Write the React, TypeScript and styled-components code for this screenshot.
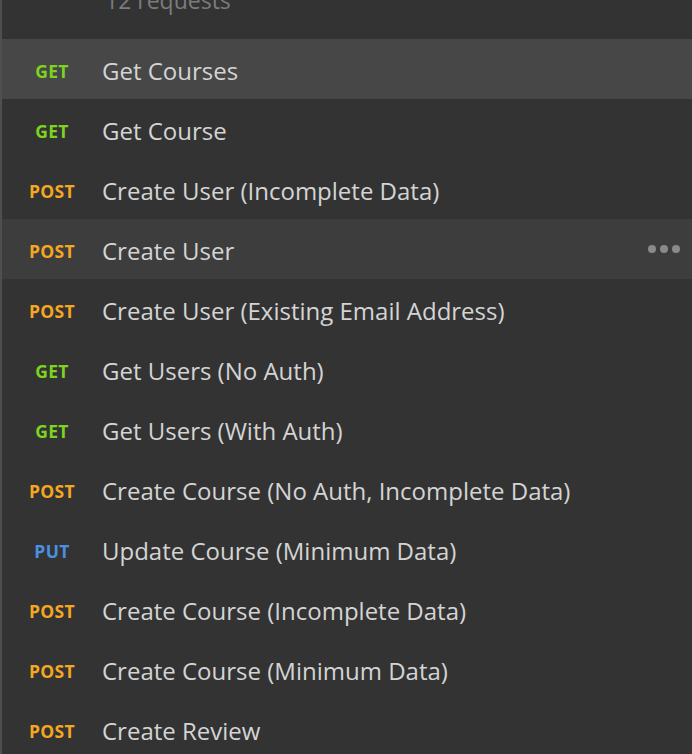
import React from "react";
import styled, { createGlobalStyle } from "styled-components";

const Global = createGlobalStyle`
  html, body { margin: 0; padding: 0; background: #333333; }
  body { font-family: "Open Sans", "Noto Sans", sans-serif; overflow: hidden; }
`;

const Panel = styled.div`
  width: 692px;
  height: 754px;
  background: #333333;
  border-left: 2px solid #4f4f4f;
  box-sizing: border-box;
  overflow: hidden;
  display: flex;
  flex-direction: column;
`;

const Header = styled.div`
  height: 39px;
  flex: none;
  padding-left: 103px;
  overflow: hidden;
`;

const Count = styled.div`
  margin-top: -15px;
  font-size: 23px;
  line-height: 30px;
  color: #7c7c7c;
`;

const Row = styled.div<{ $state?: "active" | "hover" }>`
  height: 60px;
  flex: none;
  display: flex;
  align-items: center;
  padding-top: 3px;
  box-sizing: border-box;
  padding-left: 27px;
  padding-right: 12px;
  background: ${(p) =>
    p.$state === "active" ? "#474747" : p.$state === "hover" ? "#3d3d3d" : "transparent"};
`;

const colors = { GET: "#7ed321", POST: "#f5a623", PUT: "#4a90e2" } as const;

const Method = styled.span<{ $m: keyof typeof colors }>`
  width: 73px;
  flex: none;
  text-align: center;
  font-weight: 700;
  font-size: 17.5px;
  letter-spacing: 0.3px;
  color: ${(p) => colors[p.$m]};
  box-sizing: border-box;
  padding-right: 27px;
`;

const Name = styled.span`
  flex: 1;
  font-size: 24px;
  color: #d4d4d4;
  white-space: nowrap;
`;

const Dots = styled.div`
  display: flex;
  gap: 4px;
  margin-top: -3px;
`;

const Dot = styled.span`
  width: 8px;
  height: 8px;
  border-radius: 50%;
  background: #8a8a8a;
`;

type Item = { m: keyof typeof colors; name: string; state?: "active" | "hover" };

const items: Item[] = [
  { m: "GET", name: "Get Courses", state: "active" },
  { m: "GET", name: "Get Course" },
  { m: "POST", name: "Create User (Incomplete Data)" },
  { m: "POST", name: "Create User", state: "hover" },
  { m: "POST", name: "Create User (Existing Email Address)" },
  { m: "GET", name: "Get Users (No Auth)" },
  { m: "GET", name: "Get Users (With Auth)" },
  { m: "POST", name: "Create Course (No Auth, Incomplete Data)" },
  { m: "PUT", name: "Update Course (Minimum Data)" },
  { m: "POST", name: "Create Course (Incomplete Data)" },
  { m: "POST", name: "Create Course (Minimum Data)" },
  { m: "POST", name: "Create Review" },
];

export default function App() {
  return (
    <>
      <Global />
      <Panel>
        <Header>
          <Count>12 requests</Count>
        </Header>
        {items.map((it, i) => (
          <Row key={i} $state={it.state}>
            <Method $m={it.m}>{it.m}</Method>
            <Name>{it.name}</Name>
            {it.state === "hover" && (
              <Dots>
                <Dot />
                <Dot />
                <Dot />
              </Dots>
            )}
          </Row>
        ))}
      </Panel>
    </>
  );
}
